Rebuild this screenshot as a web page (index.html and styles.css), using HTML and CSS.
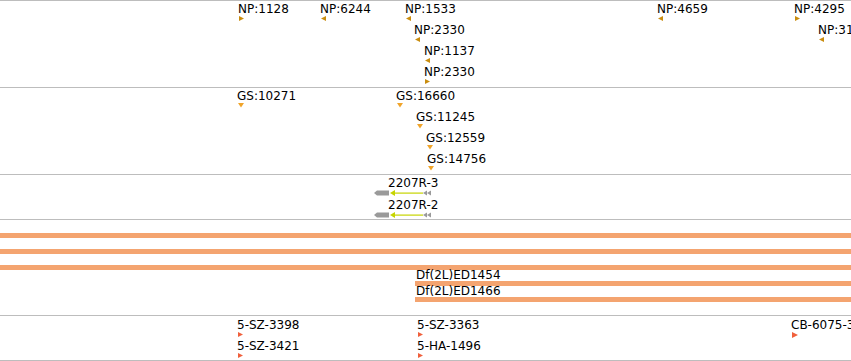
FILE: index.html
```html
<!DOCTYPE html>
<html lang="en">
<head>
    <meta charset="UTF-8">
    <meta name="viewport" content="width=device-width, initial-scale=1.0">
    <title>Track Panel</title>
    <link rel="stylesheet" href="styles.css">
</head>
<body>
    <div class="panel">
        <!-- NP matches -->
        <div class="track track-np">
            <div class="feat" style="--x:238px; --r:0"><span class="lbl">NP:1128</span><svg class="mark" width="6" height="6"><polygon points="0,0 5,2.5 0,5"/></svg></div>
            <div class="feat" style="--x:320px; --r:0"><span class="lbl">NP:6244</span><svg class="mark" width="6" height="6"><polygon points="5,0 0,2.5 5,5"/></svg></div>
            <div class="feat" style="--x:405px; --r:0"><span class="lbl">NP:1533</span><svg class="mark" width="6" height="6"><polygon points="5,0 0,2.5 5,5"/></svg></div>
            <div class="feat" style="--x:414px; --r:1"><span class="lbl">NP:2330</span><svg class="mark" width="6" height="6"><polygon points="5,0 0,2.5 5,5"/></svg></div>
            <div class="feat" style="--x:424px; --r:2"><span class="lbl">NP:1137</span><svg class="mark" width="6" height="6"><polygon points="5,0 0,2.5 5,5"/></svg></div>
            <div class="feat" style="--x:424px; --r:3"><span class="lbl">NP:2330</span><svg class="mark" width="6" height="6"><polygon points="0,0 5,2.5 0,5"/></svg></div>
            <div class="feat" style="--x:657px; --r:0"><span class="lbl">NP:4659</span><svg class="mark" width="6" height="6"><polygon points="5,0 0,2.5 5,5"/></svg></div>
            <div class="feat" style="--x:794px; --r:0"><span class="lbl">NP:4295</span><svg class="mark" width="6" height="6"><polygon points="0,0 5,2.5 0,5"/></svg></div>
            <div class="feat" style="--x:818px; --r:1"><span class="lbl">NP:3154</span><svg class="mark" width="6" height="6"><polygon points="5,0 0,2.5 5,5"/></svg></div>
        </div>

        <!-- GS matches -->
        <div class="track track-gs">
            <div class="feat" style="--x:237px; --r:0"><span class="lbl">GS:10271</span><svg class="mark" width="7" height="6"><polygon points="0,0 6,0 3,4.5"/></svg></div>
            <div class="feat" style="--x:396px; --r:0"><span class="lbl">GS:16660</span><svg class="mark" width="7" height="6"><polygon points="0,0 6,0 3,4.5"/></svg></div>
            <div class="feat" style="--x:416px; --r:1"><span class="lbl">GS:11245</span><svg class="mark" width="7" height="6"><polygon points="0,0 6,0 3,4.5"/></svg></div>
            <div class="feat" style="--x:426px; --r:2"><span class="lbl">GS:12559</span><svg class="mark" width="7" height="6"><polygon points="0,0 6,0 3,4.5"/></svg></div>
            <div class="feat" style="--x:427px; --r:3"><span class="lbl">GS:14756</span><svg class="mark" width="7" height="6"><polygon points="0,0 6,0 3,4.5"/></svg></div>
        </div>

        <!-- transcripts -->
        <div class="track track-gene">
            <div class="feat" style="--x:374px; --r:0">
                <span class="lbl">2207R-3</span>
                <svg class="model" width="60" height="6">
                    <polygon class="utr" points="0,3 3,0.5 15,0.5 15,5.5 3,5.5"/>
                    <polygon class="cds" points="16,3 21,0 21,6"/>
                    <rect class="cds" x="21" y="2.5" width="28" height="1.2"/>
                    <polygon class="utr" points="49,3 53,0.5 53,5.5"/>
                    <polygon class="utr" points="53,3 57,0.5 57,5.5"/>
                </svg>
            </div>
            <div class="feat" style="--x:374px; --r:1">
                <span class="lbl">2207R-2</span>
                <svg class="model" width="60" height="6">
                    <polygon class="utr" points="0,3 3,0.5 15,0.5 15,5.5 3,5.5"/>
                    <polygon class="cds" points="16,3 21,0 21,6"/>
                    <rect class="cds" x="21" y="2.5" width="28" height="1.2"/>
                    <polygon class="utr" points="49,3 53,0.5 53,5.5"/>
                    <polygon class="utr" points="53,3 57,0.5 57,5.5"/>
                </svg>
            </div>
        </div>

        <!-- deficiencies -->
        <div class="track track-df">
            <div class="lane"><div class="lane-lbl"></div><div class="lane-bar"></div></div>
            <div class="lane"><div class="lane-lbl"></div><div class="lane-bar"></div></div>
            <div class="lane"><div class="lane-lbl"></div><div class="lane-bar"></div></div>
            <div class="lane lane-right"><div class="lane-lbl">Df(2L)ED1454</div><div class="lane-bar"></div></div>
            <div class="lane lane-right"><div class="lane-lbl">Df(2L)ED1466</div><div class="lane-bar"></div></div>
        </div>

        <!-- insertions -->
        <div class="track track-ins">
            <div class="feat" style="--x:237px; --r:0"><span class="lbl">5-SZ-3398</span><svg class="mark" width="6" height="6"><polygon points="0,0 5,2.5 0,5"/></svg></div>
            <div class="feat" style="--x:237px; --r:1"><span class="lbl">5-SZ-3421</span><svg class="mark" width="6" height="6"><polygon points="0,0 5,2.5 0,5"/></svg></div>
            <div class="feat" style="--x:417px; --r:0"><span class="lbl">5-SZ-3363</span><svg class="mark" width="6" height="6"><polygon points="0,0 5,2.5 0,5"/></svg></div>
            <div class="feat" style="--x:417px; --r:1"><span class="lbl">5-HA-1496</span><svg class="mark" width="6" height="6"><polygon points="0,0 5,2.5 0,5"/></svg></div>
            <div class="feat" style="--x:791px; --r:0"><span class="lbl">CB-6075-3</span><svg class="mark" width="7" height="7"><polygon points="0,0 6,3 0,6"/></svg></div>
        </div>
    </div>
</body>
</html>
```

FILE: styles.css
```css
* {
    margin: 0;
    padding: 0;
    box-sizing: border-box;
}

body {
    background-color: #ffffff;
    color: #000000;
    font-family: "DejaVu Sans", sans-serif;
    font-size: 12px;
    width: 851px;
    height: 361px;
    overflow: hidden;
}

.panel {
    width: 100%;
}

.track {
    position: relative;
    overflow: hidden;
    border-top: 1px solid #bdbdbd;
}

.track-np {
    height: 87px;
    --pitch: 21px;
    --off: 1px;
}

.track-gs {
    height: 87px;
    --pitch: 21px;
    --off: 1px;
}

.track-gene {
    height: 45px;
    --pitch: 22px;
    --off: 1px;
}

.track-df {
    height: 96px;
    padding-top: 2px;
}

.track-ins {
    height: 46px;
    border-bottom: 1px solid #bdbdbd;
    --pitch: 21px;
    --off: 2px;
}

.feat {
    position: absolute;
    left: var(--x);
    top: calc(var(--r) * var(--pitch) + var(--off));
}

.lbl {
    display: block;
    line-height: 14px;
    white-space: nowrap;
}

.mark {
    display: block;
    margin-left: 1px;
}

.track-np .mark polygon {
    fill: #c98d0f;
}

.track-gs .mark polygon {
    fill: #f0a42a;
}

.track-ins .mark polygon {
    fill: #f0603c;
}

/* gene model */
.track-gene .lbl {
    margin-left: 14px;
}

.model {
    display: block;
}

.model .utr {
    fill: #9a9a9a;
}

.model .cds {
    fill: #c6d400;
}

/* deficiency lanes */
.lane {
    height: 16px;
}

.lane-lbl {
    height: 11px;
    line-height: 11px;
    padding-left: 1px;
    white-space: nowrap;
}

.lane-bar {
    height: 5px;
    background-color: #f4a470;
}

.lane-right {
    margin-left: 415px;
}
```
